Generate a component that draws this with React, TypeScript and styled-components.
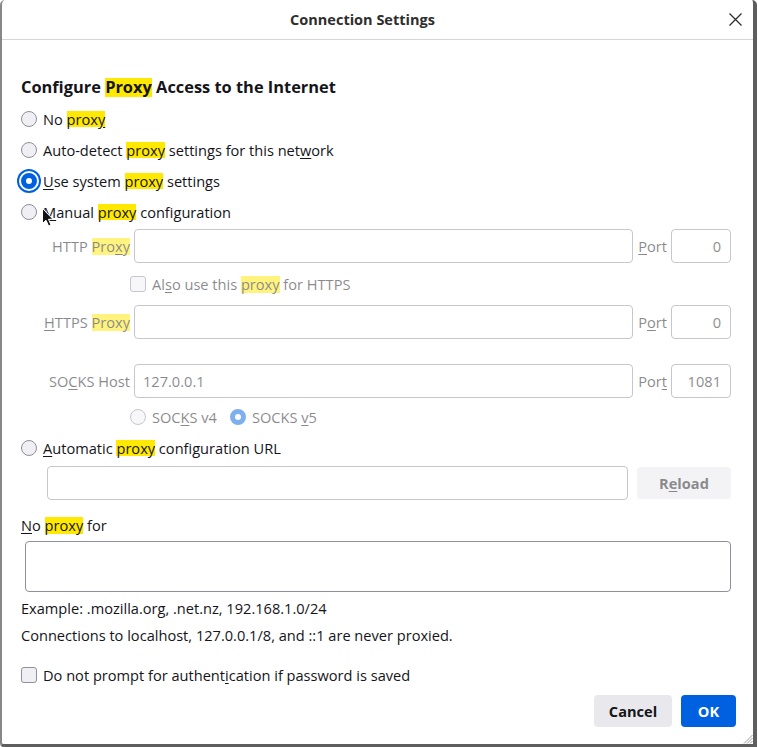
import React from 'react';
import styled, { createGlobalStyle } from 'styled-components';

const GlobalStyle = createGlobalStyle`
  html, body { margin: 0; background: #fff; }
  body {
    font-family: "Open Sans", "Noto Sans", sans-serif;
    font-size: 14.6px;
    color: #15141a;
  }
`;

const BLUE = '#0061e0';

const Window = styled.div`
  position: relative;
  box-sizing: border-box;
  width: 757px;
  height: 747px;
  display: flex;
  flex-direction: column;
  background: #fff;
  border-left: 2px solid #878787;
  border-right: 4px solid #5e5e5e;
  border-bottom: 3px solid #5e5e5e;
  border-radius: 5px 5px 0 4px;
  overflow: hidden;
`;

const TitleBar = styled.div`
  height: 39px;
  flex: none;
  display: flex;
  align-items: center;
  border-bottom: 1px solid #d6d6d6;
`;

const Title = styled.div`
  flex: 1;
  text-align: center;
  font-weight: 700;
  font-size: 14.5px;
  color: #2e2e2e;
`;

const CloseButton = styled.div`
  width: 30px;
  height: 39px;
  display: flex;
  align-items: center;
  padding-left: 6px;
  box-sizing: border-box;
`;

const Content = styled.div`
  display: flex;
  flex-direction: column;
  padding: 0 22px 0 19px;
`;

const Heading = styled.h1`
  margin: 36px 0 0;
  font-size: 16.4px;
  line-height: 22px;
  font-weight: 700;
`;

const Mark = styled.span`
  display: inline-block;
  line-height: 1.15;
  background: #ffe900;
`;

const Key = styled.span`
  text-decoration: underline;
  text-underline-offset: 2px;
`;

const OptionRow = styled.div<{ $mt?: number; $h?: number; $indent?: number }>`
  display: flex;
  align-items: center;
  gap: 6px;
  height: ${(p) => p.$h ?? 31}px;
  margin-top: ${(p) => p.$mt ?? 0}px;
  padding-left: ${(p) => p.$indent ?? 0}px;
  white-space: nowrap;
`;

const Radio = styled.span<{ $checked?: boolean; $focus?: boolean }>`
  box-sizing: border-box;
  flex: none;
  width: 16px;
  height: 16px;
  border-radius: 50%;
  background: ${(p) => (p.$checked ? '#fff' : '#f0f0f4')};
  border: ${(p) => (p.$checked ? `5px solid ${BLUE}` : '1px solid #8f8f9d')};
  box-shadow: ${(p) => (p.$focus ? `0 0 0 2px #fff, 0 0 0 4px ${BLUE}` : 'none')};
`;

const Checkbox = styled.span`
  box-sizing: border-box;
  flex: none;
  width: 16px;
  height: 16px;
  border-radius: 3px;
  background: #f0f0f4;
  border: 1px solid #8f8f9d;
`;

const Dimmed = styled.div`
  display: flex;
  flex-direction: column;
  opacity: 0.5;
`;

const FieldRow = styled.div<{ $mt: number }>`
  display: flex;
  align-items: center;
  height: 34px;
  margin-top: ${(p) => p.$mt}px;
  white-space: nowrap;
`;

const FieldLabel = styled.label`
  width: 109px;
  flex: none;
  text-align: right;
  margin-right: 4px;
`;

const PortLabel = styled.label`
  margin: 0 4px 0 5px;
`;

const TextInput = styled.input<{ $w?: number; $align?: 'left' | 'right' }>`
  box-sizing: border-box;
  height: 34px;
  flex: ${(p) => (p.$w ? 'none' : '1')};
  width: ${(p) => (p.$w ? `${p.$w}px` : 'auto')};
  min-width: 0;
  margin: 0;
  padding: 0 ${(p) => (p.$align === 'right' ? 9 : 8)}px;
  text-align: ${(p) => p.$align ?? 'left'};
  font: inherit;
  color: #15141a;
  background: #fff;
  border: 1px solid #8f8f9d;
  border-radius: 4px;
  outline: none;
`;

const UrlRow = styled.div`
  display: flex;
  align-items: center;
  height: 34px;
  margin-top: 3px;
  padding-left: 26px;
  gap: 9px;
`;

const GreyButton = styled.button<{ $w: number }>`
  flex: none;
  width: ${(p) => p.$w}px;
  height: 32px;
  border: none;
  border-radius: 4px;
  background: #e9e9ed;
  font: inherit;
  font-weight: 700;
  color: #15141a;
  padding: 0;
`;

const PrimaryButton = styled(GreyButton)`
  background: ${BLUE};
  color: #fff;
`;

const Line = styled.div<{ $mt: number }>`
  line-height: 20px;
  margin-top: ${(p) => p.$mt}px;
  white-space: nowrap;
`;

const TextArea = styled.textarea`
  box-sizing: border-box;
  display: block;
  height: 51px;
  margin: 6px 0 0 4px;
  padding: 6px 8px;
  font: inherit;
  resize: none;
  border: 1px solid #8f8f9d;
  border-radius: 4px;
  outline: none;
`;

const ButtonBar = styled.div`
  display: flex;
  justify-content: flex-end;
  gap: 9px;
  margin: 8px -5px 0 0;
`;

const SocksLabel = styled.span`
  margin-right: 7px;
`;

const Cursor = styled.svg`
  position: absolute;
  left: 39px;
  top: 207px;
`;

const Grip = styled.svg`
  position: absolute;
  right: 0;
  bottom: 0;
`;

export default function App() {
  return (
    <>
      <GlobalStyle />
      <Window>
        <TitleBar>
          <Title>Connection Settings</Title>
          <CloseButton>
            <svg width="13" height="13" viewBox="0 0 13 13">
              <path d="M0.5 0.5 L12.5 12.5 M12.5 0.5 L0.5 12.5" stroke="#2e2e2e" strokeWidth="1.3" />
            </svg>
          </CloseButton>
        </TitleBar>

        <Content>
          <Heading>
            Configure <Mark>Proxy</Mark> Access to the Internet
          </Heading>

          <OptionRow $mt={5}>
            <Radio />
            <span>
              No <Mark>prox<Key>y</Key></Mark>
            </span>
          </OptionRow>
          <OptionRow>
            <Radio />
            <span>
              Auto-detect <Mark>proxy</Mark> settings for this net<Key>w</Key>ork
            </span>
          </OptionRow>
          <OptionRow>
            <Radio $checked $focus />
            <span>
              <Key>U</Key>se system <Mark>proxy</Mark> settings
            </span>
          </OptionRow>
          <OptionRow>
            <Radio />
            <span>
              <Key>M</Key>anual <Mark>proxy</Mark> configuration
            </span>
          </OptionRow>

          <Dimmed>
            <FieldRow $mt={2}>
              <FieldLabel>
                HTTP <Mark>Pro<Key>x</Key>y</Mark>
              </FieldLabel>
              <TextInput disabled defaultValue="" />
              <PortLabel>
                <Key>P</Key>ort
              </PortLabel>
              <TextInput disabled $w={60} $align="right" defaultValue="0" />
            </FieldRow>
            <OptionRow $mt={9} $h={24} $indent={109}>
              <Checkbox />
              <span>
                Al<Key>s</Key>o use this <Mark>proxy</Mark> for HTTPS
              </span>
            </OptionRow>
            <FieldRow $mt={9}>
              <FieldLabel>
                <Key>H</Key>TTPS <Mark>Proxy</Mark>
              </FieldLabel>
              <TextInput disabled defaultValue="" />
              <PortLabel>
                P<Key>o</Key>rt
              </PortLabel>
              <TextInput disabled $w={60} $align="right" defaultValue="0" />
            </FieldRow>
            <FieldRow $mt={25}>
              <FieldLabel>
                SO<Key>C</Key>KS Host
              </FieldLabel>
              <TextInput disabled defaultValue="127.0.0.1" />
              <PortLabel>
                Por<Key>t</Key>
              </PortLabel>
              <TextInput disabled $w={60} $align="right" defaultValue="1081" />
            </FieldRow>
            <OptionRow $mt={7} $h={24} $indent={109}>
              <Radio />
              <SocksLabel>
                SOC<Key>K</Key>S v4
              </SocksLabel>
              <Radio $checked />
              <span>
                SOCKS <Key>v</Key>5
              </span>
            </OptionRow>
          </Dimmed>

          <OptionRow $mt={3}>
            <Radio />
            <span>
              <Key>A</Key>utomatic <Mark>proxy</Mark> configuration URL
            </span>
          </OptionRow>
          <Dimmed>
            <UrlRow>
              <TextInput disabled defaultValue="" />
              <GreyButton $w={94} disabled>
                R<Key>e</Key>load
              </GreyButton>
            </UrlRow>
          </Dimmed>

          <Line $mt={15}>
            <Key>N</Key>o <Mark>proxy</Mark> for
          </Line>
          <TextArea defaultValue="" />

          <Line $mt={6}>Example: .mozilla.org, .net.nz, 192.168.1.0/24</Line>
          <Line $mt={7}>Connections to localhost, 127.0.0.1/8, and ::1 are never proxied.</Line>

          <OptionRow $mt={18} $h={24}>
            <Checkbox />
            <span>
              Do not prompt for authent<Key>i</Key>cation if password is saved
            </span>
          </OptionRow>

          <ButtonBar>
            <GreyButton $w={78}>Cancel</GreyButton>
            <PrimaryButton $w={55}>OK</PrimaryButton>
          </ButtonBar>
        </Content>

        <Cursor width="14" height="21" viewBox="0 0 14 21">
          <path
            d="M1.5 1.5 L1.5 16.5 L5 13.2 L7.6 19 L10 18 L7.5 12.3 L12 12.3 Z"
            fill="#111"
            stroke="#fff"
            strokeWidth="1"
            strokeLinejoin="round"
          />
        </Cursor>
        <Grip width="11" height="11" viewBox="0 0 11 11">
          <path d="M10.5 2 L2 10.5 M10.5 5 L5 10.5 M10.5 8 L8 10.5" stroke="#9a9a9a" strokeWidth="1" />
        </Grip>
      </Window>
    </>
  );
}
